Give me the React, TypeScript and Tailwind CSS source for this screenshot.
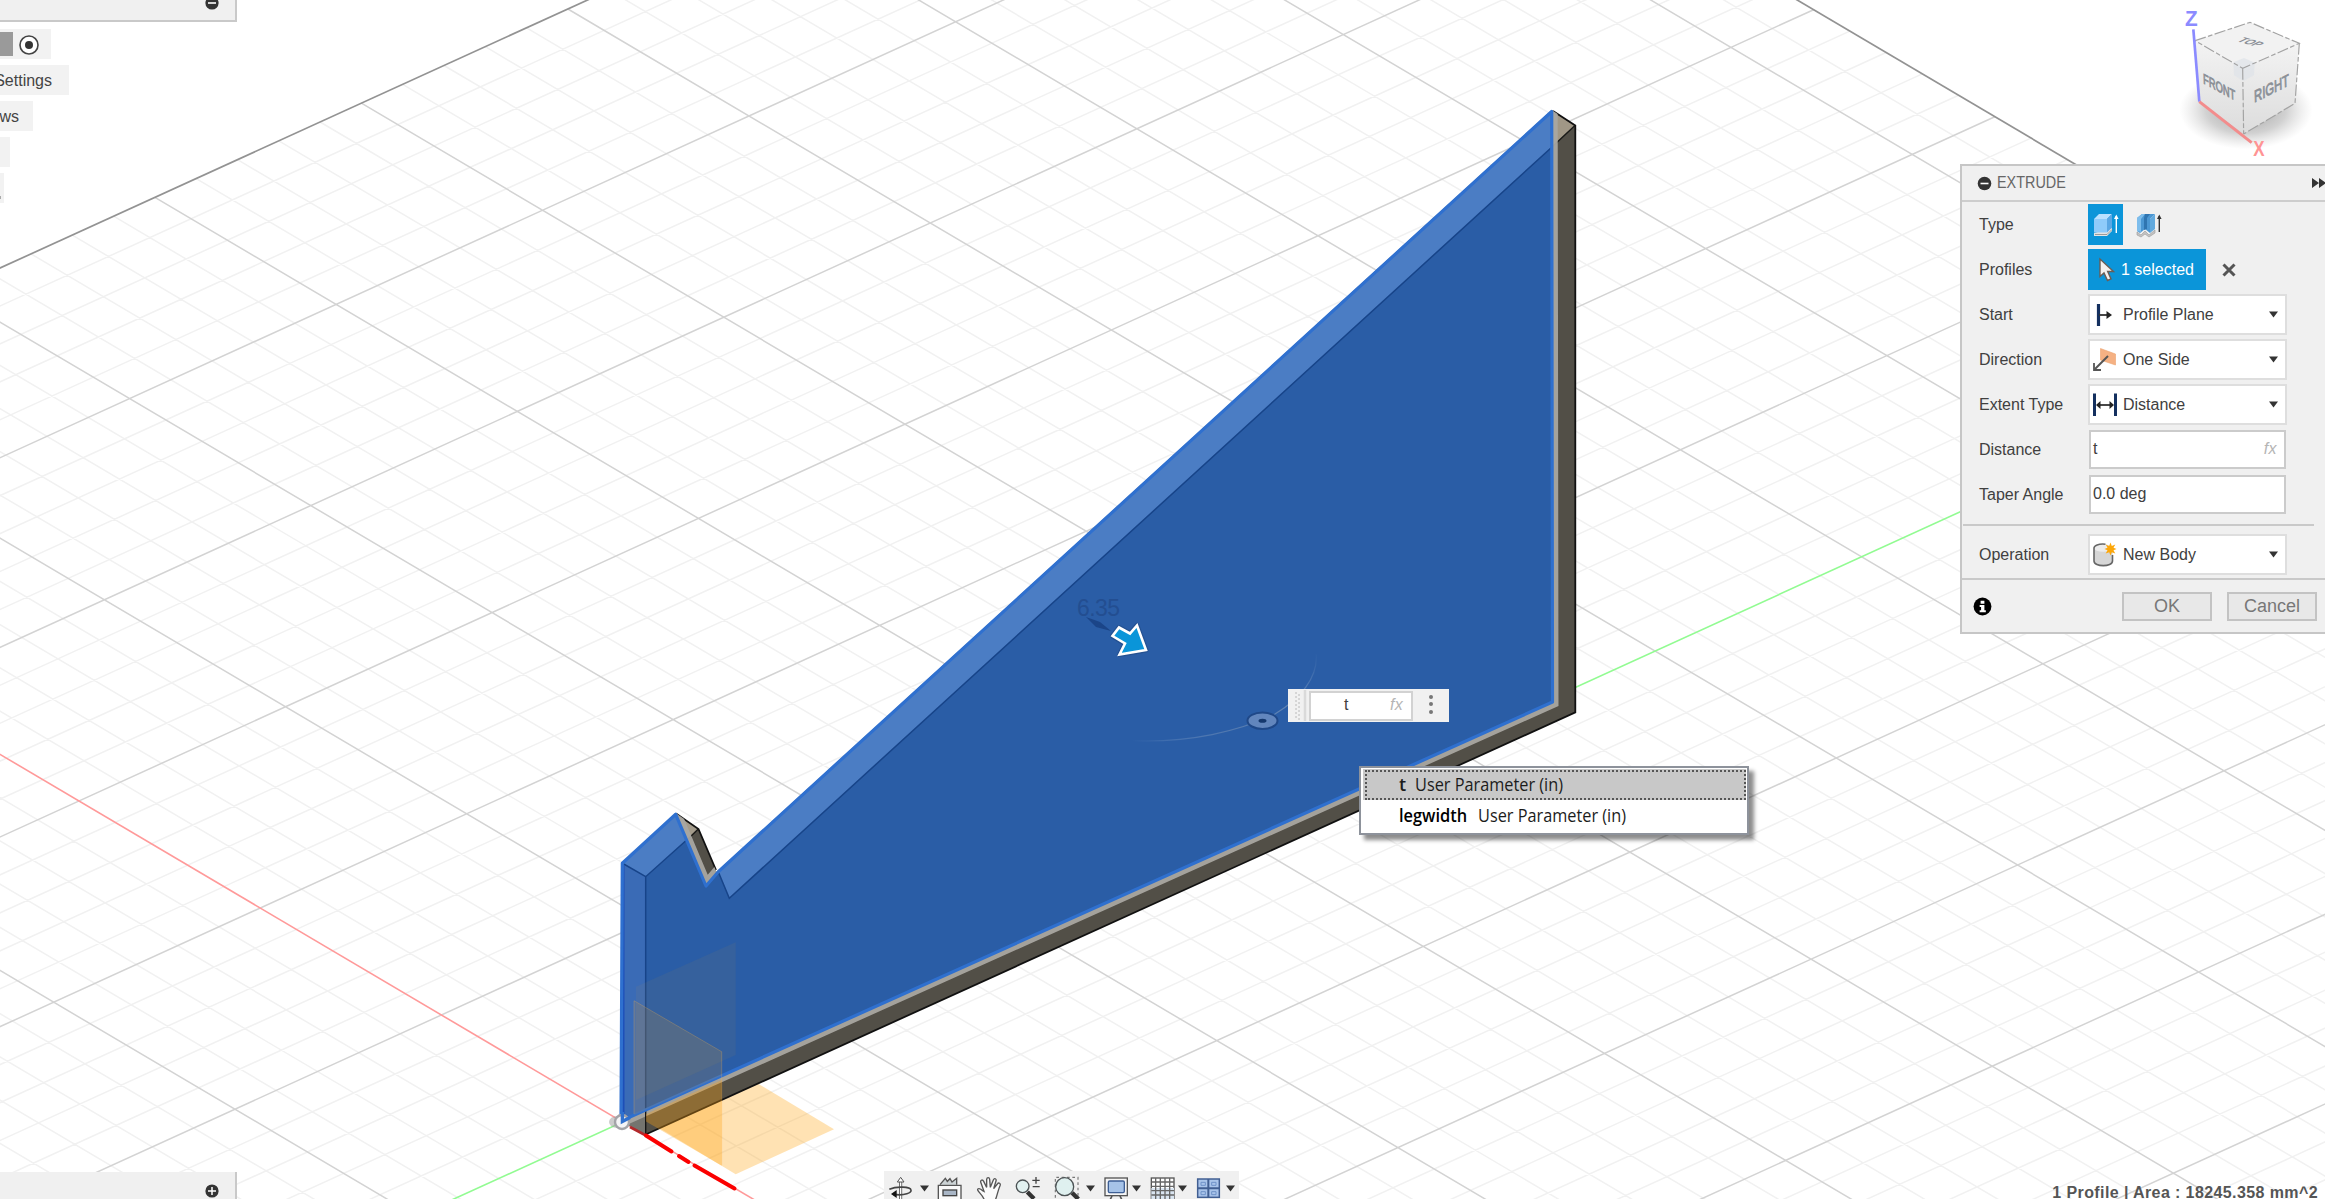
import React from "react";

const A = [206.5, -94.2];
const B = [181.2, 107];
const ORIGIN = [622.6, 1122];

const at = (i: number, j: number) => [
  ORIGIN[0] + i * A[0] + j * B[0],
  ORIGIN[1] + i * A[1] + j * B[1],
];

const seg = (i1: number, j1: number, i2: number, j2: number) => {
  const p = at(i1, j1);
  const q = at(i2, j2);
  return `M${p[0].toFixed(1)} ${p[1].toFixed(1)}L${q[0].toFixed(1)} ${q[1].toFixed(1)}`;
};

const EDGE_I = 8.4;
const EDGE_J = -6;

function gridPaths() {
  let minor = "";
  let major = "";
  for (let k = -30; k < EDGE_I * 5; k++) {
    const d = seg(k / 5, EDGE_J, k / 5, 9);
    if (k % 5 === 0) {
      if (k !== 0) major += d;
    } else minor += d;
  }
  for (let k = EDGE_J * 5 + 1; k <= 45; k++) {
    const d = seg(-9, k / 5, EDGE_I, k / 5);
    if (k % 5 === 0) {
      if (k !== 0) major += d;
    } else minor += d;
  }
  return { minor, major };
}

const PROFILE = "621,1121 622.3,863.3 675.7,814.3 706,886 718.3,871.7 1551.7,111.5 1552.5,702";
const SILHOUETTE =
  "621,1121 622,863 675.7,813 698.5,829 716.5,872 1551.7,110 1575.3,125.5 1575.3,712.4 645.7,1134.5";

function Viewport() {
  const { minor, major } = gridPaths();
  return (
    <svg className="absolute inset-0" width="2325" height="1199" viewBox="0 0 2325 1199" fill="none">
      <defs>
        <clipPath id="solid">
          <polygon points={SILHOUETTE} />
        </clipPath>
        <clipPath id="face">
          <polygon points={PROFILE} />
        </clipPath>
        <linearGradient id="arcFade" x1="1132" y1="740" x2="1316" y2="650" gradientUnits="userSpaceOnUse">
          <stop offset="0" stopColor="#6f93c4" stopOpacity="0" />
          <stop offset="0.4" stopColor="#4f77af" />
          <stop offset="0.8" stopColor="#6486b4" />
          <stop offset="1" stopColor="#6f93c4" stopOpacity="0" />
        </linearGradient>
      </defs>

      <path d={minor} stroke="#f1f1f1" strokeWidth="1.5" />
      <path d={major} stroke="#d3d3d3" strokeWidth="1.5" />
      <path d={seg(-9, EDGE_J, EDGE_I, EDGE_J)} stroke="#939393" strokeWidth="1.7" />
      <path d={seg(EDGE_I, EDGE_J, EDGE_I, 9)} stroke="#939393" strokeWidth="1.7" />
      <path d={seg(0, -6, 0, 2)} stroke="#ff9a9a" strokeWidth="1.6" />
      <path d={seg(-4, 0, EDGE_I, 0)} stroke="#92fb92" strokeWidth="1.6" />

      {/* ground plane */}
      <polygon points="646,1120 748.3,1077.7 834,1129.3 735.7,1174.3" fill="#ffa514" fillOpacity="0.32" />

      {/* solid body */}
      <polygon points={SILHOUETTE} fill="#524f47" />
      <polygon points="1551,110 1575.3,125.5 1552,147" fill="#a09786" />
      <polygon points="675.7,813 698.5,829 686.7,840" fill="#a39b8b" />
      <path d="M1575 125.5L1552 147M698.3 829L686 841" stroke="#1a1a18" strokeWidth="1.5" />
      <path
        d="M1553 111L1575.3 125.5V712.4L645.7 1134.5M676 813.5L698.5 829L716 870"
        stroke="#111"
        strokeWidth="1.8"
      />
      <g clipPath="url(#solid)">
        <polygon points="621,1121 645.7,1108 645.7,1134.5" fill="#74746f" />
        <polygon points={PROFILE} stroke="#a9a6a1" strokeWidth="12" strokeOpacity="0.95" />
        <path d="M645.7 1100V1134" stroke="#111" strokeWidth="1.3" />
      </g>

      {/* selected profile */}
      <polygon points={PROFILE} fill="#2a5da6" />
      <g clipPath="url(#face)">
        <polygon points="622,863 645.7,876.7 645.7,1134 621,1121" fill="#3a6bb6" />
        <polygon points="622,863 675.7,813 687.5,839.3 645.7,876.7" fill="#4b7dc4" />
        <polygon points="718.3,871.7 729.3,898.3 1552,147 1552,110" fill="#4b7dc4" />
        <path
          d="M622 863L645.7 876.7L687.5 839.3M645.7 876.7V1134M718.8 873L729.3 898.3L1552 147"
          stroke="#174489"
          strokeWidth="1.5"
        />
        <path d="M623.5 1119V865" stroke="#1c4fb8" strokeWidth="2" />
      </g>
      <polygon points={PROFILE} stroke="#2f70cf" strokeWidth="3.2" strokeLinejoin="round" />

      {/* origin planes */}
      <polygon points="636,986.7 735.7,942.3 735.7,1055 636,1100" fill="#ffa514" fillOpacity="0.06" />
      <g clipPath="url(#face)">
        <polygon points="634,1000.7 721.7,1051.7 721.7,1165.7 634,1114.3" fill="#ffa514" fillOpacity="0.14" />
      </g>
      <polygon points="646,1114 721.7,1080 721.7,1165.7 646,1121.5" fill="#ffa514" fillOpacity="0.34" />
      <path d="M634 1114V1000.7L721.7 1051.7V1165" stroke="#ffb84d" strokeOpacity="0.25" />

      {/* origin and near axis */}
      <ellipse cx="617" cy="1122" rx="8" ry="6" fill="#9a9a9a" fillOpacity="0.5" />
      <circle cx="622" cy="1122" r="7" fill="#f4f4f6" stroke="#a3a3a8" strokeWidth="2.4" />
      <path d="M622.4 1112V1121.5L630 1117.5" stroke="#2f70cf" strokeWidth="3.4" />
      <path d="M630 1127L646 1135.5" stroke="#b3282b" strokeWidth="2.6" />
      <path
        d="M646 1135.5L671.5 1151.5M679 1156L688.5 1162M694.5 1165.5L734.5 1188.5"
        stroke="#fb0000"
        strokeWidth="4"
        strokeLinecap="round"
      />

      {/* distance manipulator */}
      <text x="1077" y="616" fontSize="23" textLength="43" fill="#234e91" fontFamily="Liberation Sans, sans-serif">
        6.35
      </text>
      <path d="M1086 617L1100 622L1111 631L1096 627Z" fill="#1b4588" />
      <path
        d="M1119 627.5L1130 633.5L1137 625.5L1146 650L1119.5 654.5L1125 643.5L1112.5 636Z"
        fill="#0a95d9"
        stroke="#1d467d"
        strokeWidth="5"
        strokeLinejoin="round"
        strokeOpacity="0.5"
      />
      <path
        d="M1119 627.5L1130 633.5L1137 625.5L1146 650L1119.5 654.5L1125 643.5L1112.5 636Z"
        fill="#0a95d9"
        stroke="#fff"
        strokeWidth="2.6"
      />

      {/* taper manipulator */}
      <path
        d="M1132 740.7C1190 743 1240 731 1275 714C1300 699 1318 678 1316.3 654"
        stroke="url(#arcFade)"
        strokeWidth="1.2"
      />
      <ellipse cx="1262.5" cy="720.7" rx="15" ry="8.2" fill="#6286bd" stroke="#1f4888" strokeWidth="2" />
      <ellipse cx="1262.5" cy="720.7" rx="4" ry="2" fill="#15386d" />
    </svg>
  );
}

function ViewCube() {
  return (
    <svg className="absolute left-[2180px] top-0" width="145" height="160" viewBox="720 0 435 480" fill="none">
      <defs>
        <linearGradient id="cubeL" x1="0" y1="0" x2="0" y2="1">
          <stop offset="0" stopColor="#f3f3f3" />
          <stop offset="1" stopColor="#dcdcdc" />
        </linearGradient>
        <radialGradient id="cubeShadow">
          <stop offset="0" stopColor="#777" stopOpacity="0.75" />
          <stop offset="0.6" stopColor="#999" stopOpacity="0.45" />
          <stop offset="1" stopColor="#bbb" stopOpacity="0" />
        </radialGradient>
      </defs>
      <ellipse cx="918" cy="330" rx="200" ry="118" fill="url(#cubeShadow)" />
      <polygon points="765,122 930,67 1078,130 908,205" fill="#f2f2f2" />
      <polygon points="765,122 908,205 911,402 778,305" fill="url(#cubeL)" />
      <polygon points="908,205 1078,130 1065,310 911,402" fill="url(#cubeL)" />
      <polygon points="880,187 912,174 944,188 942,226 910,243 882,226" fill="#dfe3e8" fillOpacity="0.75" />
      <path
        d="M765 122L930 67L1078 130L908 205ZM908 205L911 402M1078 130L1065 310L911 402"
        stroke="#a3a3a3"
        strokeWidth="3.5"
        strokeDasharray="34 7 14 7"
      />
      <path d="M778 305L760 88" stroke="#8b8bff" strokeWidth="8" />
      <path d="M778 305L935 428" stroke="#f38c8c" strokeWidth="9" />
      <g fontFamily="Liberation Sans, sans-serif" textAnchor="middle">
        <text
          transform="matrix(1 0.55 0.03 1 838 276)"
          fontSize="43"
          textLength="96"
          lengthAdjust="spacingAndGlyphs"
          fill="#8b9097"
          stroke="#8b9097"
          strokeWidth="2.5"
        >
          FRONT
        </text>
        <text
          transform="matrix(1 -0.5 0.03 1 995 282)"
          fontSize="50"
          textLength="104"
          lengthAdjust="spacingAndGlyphs"
          fill="#8b9097"
          stroke="#8b9097"
          strokeWidth="2.5"
        >
          RIGHT
        </text>
        <text
          transform="matrix(1 0.3 -0.9 0.42 920 132)"
          fontSize="40"
          fontWeight="bold"
          textLength="62"
          lengthAdjust="spacingAndGlyphs"
          fill="#8b9097"
        >
          TOP
        </text>
        <text x="754" y="79" fontSize="66" fontWeight="bold" textLength="38" lengthAdjust="spacingAndGlyphs" fill="#8b8bff">
          Z
        </text>
        <text x="957" y="467" fontSize="66" fontWeight="bold" textLength="34" lengthAdjust="spacingAndGlyphs" fill="#ff9494">
          X
        </text>
      </g>
    </svg>
  );
}

function Caret() {
  return (
    <svg width="9" height="7" viewBox="0 0 9 7" className="shrink-0">
      <path d="M0 0.5H9L4.5 6.5Z" fill="#333" />
    </svg>
  );
}

function Row({ label, children }: { label: string; children: React.ReactNode }) {
  return (
    <div className="flex h-[45px] items-center pl-[17px]">
      <span className="w-[109px] shrink-0 whitespace-nowrap pt-px">{label}</span>
      {children}
    </div>
  );
}

function Select({ icon, text }: { icon: React.ReactNode; text: string }) {
  return (
    <div className="flex h-[41px] w-[199px] items-center border-2 border-[#dedede] bg-white pr-[7px]">
      <span className="flex w-[33px] shrink-0 justify-start pl-[2px]">{icon}</span>
      <span className="flex-1 whitespace-nowrap pt-px">{text}</span>
      <Caret />
    </div>
  );
}

const StartIcon = () => (
  <svg width="26" height="28" viewBox="0 0 26 28" fill="none">
    <path d="M6.500 3V25" stroke="#14305f" strokeWidth="3.2" />
    <path d="M7 14H17" stroke="#333" strokeWidth="1.8" />
    <path d="M14.500 10L20 14L14.500 18Z" fill="#222" />
  </svg>
);

const DirectionIcon = () => (
  <svg width="26" height="28" viewBox="0 0 26 28" fill="none">
    <path d="M8.5 2.5L23.5 8V19L8.5 14Z" fill="#f5b183" stroke="#eda26f" strokeWidth="0.6" />
    <path d="M16 10L3 23" stroke="#555" strokeWidth="2" />
    <path d="M2 17V24H9" stroke="#555" strokeWidth="1.8" />
  </svg>
);

const DistanceIcon = () => (
  <svg width="26" height="28" viewBox="0 0 26 28" fill="none">
    <path d="M2.500 2.500V25M23.500 2.500V25" stroke="#14305f" strokeWidth="3" />
    <path d="M6 14H20" stroke="#333" strokeWidth="1.8" />
    <path d="M8.500 10L4 14L8.500 18ZM17.500 10L22 14L17.500 18Z" fill="#222" />
  </svg>
);

const NewBodyIcon = () => (
  <svg width="26" height="28" viewBox="0 0 26 28" fill="none">
    <path d="M2 6.500V20C2 26 20.500 26 20.500 20V6.500Z" fill="#d6d6d6" />
    <ellipse cx="11.200" cy="7" rx="9.200" ry="3.800" fill="#ececec" />
    <path d="M13.500 3.200C6.500 2.500 2 4.500 2 7V20C2 26.200 20.500 26.200 20.500 20V14" stroke="#666" strokeWidth="1.600" />
    <path
      d="M18.500 1.500L19.800 5L23.300 3.500L21.500 6.800L24.500 8L21.500 9.300L23.300 12.600L19.800 11.200L18.500 14.500L17.200 11.200L13.700 12.600L15.500 9.300L12.500 8L15.500 6.800L13.700 3.500L17.200 5Z"
      fill="#fca70a"
    />
  </svg>
);

function ExtrudePanel() {
  return (
    <div className="absolute left-[1960px] top-[164px] flex h-[470px] w-[373px] flex-col border-2 border-[#c6c6c6] bg-[#f0f0f0] text-base leading-5 text-[#404040]">
      <div className="flex h-[36px] shrink-0 items-center border-b-2 border-[#cdcdcd] pl-[15px] pr-[5px]">
        <svg width="15" height="15" viewBox="0 0 15 15">
          <circle cx="7.500" cy="7.500" r="6.800" fill="#333" />
          <path d="M3.500 7.500H11.500" stroke="#fff" strokeWidth="1.600" />
        </svg>
        <span className="-mt-px ml-[5px] flex-1 origin-left scale-x-[0.9] text-[#666]">EXTRUDE</span>
        <svg width="14" height="10" viewBox="0 0 14 10">
          <path d="M0 0L7 5L0 10ZM7 0L14 5L7 10Z" fill="#333" />
        </svg>
      </div>
      <div className="shrink-0">
        <Row label="Type">
          <div className="flex h-[41px] w-[35px] items-center justify-center bg-[#0b95d9]">
            <svg width="26" height="28" viewBox="0 0 26 28" fill="none">
              <path d="M1 22V25H14L19 20V17Z" fill="#e4e4e4" />
              <path d="M2 23.500H14L19 18.500" stroke="#888" strokeWidth="0.800" />
              <path d="M1 8L6 3H19L14 8Z" fill="#b9e1ff" />
              <path d="M1 8H14V21.500H1Z" fill="#8fcbfa" />
              <path d="M14 8L19 3V16.500L14 21.500Z" fill="#5ba7e4" />
              <path d="M23.300 22V5" stroke="#fff" strokeWidth="1.400" />
              <path d="M21 8L23.300 3.500L25.600 8Z" fill="#fff" />
            </svg>
          </div>
          <svg width="26" height="28" viewBox="0 0 26 28" fill="none" className="ml-[13px]">
            <path d="M1 21L5 24L9 20L13 24L19 19L19 22L13 26L9 23L5 26L1 24Z" fill="#c3c3c3" stroke="#999" strokeWidth="0.600" />
            <path d="M1 7L6 3H19L14 8V22L9 18L4 22L1 20Z" fill="#4b97d3" />
            <path d="M1 7L6 3H9L5 8V21L1 20Z" fill="#7dbdec" />
            <path d="M9 3H14L11 7V18L8 19V7Z" fill="#2f75b1" />
            <path d="M14 8L19 3V18L14 22Z" fill="#62aade" />
            <path d="M23.300 21V5" stroke="#333" strokeWidth="1.400" />
            <path d="M21 8L23.300 3.500L25.600 8Z" fill="#333" />
          </svg>
        </Row>
        <Row label="Profiles">
          <div className="flex h-[41px] w-[118px] items-center bg-[#0b95d9] pl-[10px] text-white">
            <svg width="17" height="26" viewBox="0 0 17 26">
              <path
                d="M2 2V19.500L6 16L9.500 23.500L13 22L9.700 14.500H15.500Z"
                fill="#f4f0ee"
                stroke="#6b5d55"
                strokeWidth="1.400"
              />
            </svg>
            <span className="ml-[6px] whitespace-nowrap pt-px">1 selected</span>
          </div>
          <svg width="14" height="14" viewBox="0 0 14 14" className="ml-[16px]">
            <path d="M1.500 1.500L12.500 12.500M12.500 1.500L1.500 12.500" stroke="#555" strokeWidth="3" />
          </svg>
        </Row>
        <Row label="Start">
          <Select icon={<StartIcon />} text="Profile Plane" />
        </Row>
        <Row label="Direction">
          <Select icon={<DirectionIcon />} text="One Side" />
        </Row>
        <Row label="Extent Type">
          <Select icon={<DistanceIcon />} text="Distance" />
        </Row>
        <Row label="Distance">
          <div className="ml-px flex h-[39px] w-[197px] items-center justify-between border-2 border-[#cbcbcb] bg-white pb-[2px] pl-[2px] pr-[7px]">
            <span>t</span>
            <span className="italic tracking-wide text-[#b5b5b5]">fx</span>
          </div>
        </Row>
        <Row label="Taper Angle">
          <div className="ml-px flex h-[39px] w-[197px] items-center border-2 border-[#cbcbcb] bg-white pb-[2px] pl-[2px]">
            0.0 deg
          </div>
        </Row>
      </div>
      <div className="ml-px mt-[7px] h-[2px] w-[351px] shrink-0 bg-[#c9c9c9]" />
      <div className="shrink-0 pt-[6px]">
        <Row label="Operation">
          <Select icon={<NewBodyIcon />} text="New Body" />
        </Row>
      </div>
      <div className="mt-px flex flex-1 items-center border-t-2 border-[#c9c9c9] pl-[11px] text-lg text-[#777]">
        <svg width="19" height="19" viewBox="0 0 20 20">
          <circle cx="10" cy="10" r="9.400" fill="#000" />
          <path d="M8 4H12V7H8ZM7 8.500H12V14H13.500V16H7V14H8.500V10.500H7Z" fill="#fff" />
        </svg>
        <div className="ml-[130px] flex h-[29px] w-[90px] items-center justify-center border-2 border-[#c3c3c3] bg-[#e8e8e8]">OK</div>
        <div className="ml-[15px] flex h-[29px] w-[90px] items-center justify-center border-2 border-[#c3c3c3] bg-[#e8e8e8]">
          Cancel
        </div>
      </div>
    </div>
  );
}

function BrowserTree() {
  return (
    <div className="absolute left-0 top-0 flex flex-col items-start text-base leading-5 text-[#444]">
      <div className="flex h-[22px] w-[237px] justify-end border-b-2 border-r-2 border-[#c9c9c9] bg-[#f0f0f0] pr-4">
        <svg width="14" height="10" viewBox="0 0 14 10">
          <circle cx="7" cy="3" r="6.600" fill="#333" />
          <path d="M3 3H11" stroke="#fff" strokeWidth="1.600" />
        </svg>
      </div>
      <div className="mt-[7px] flex h-[30px] w-[51px] items-center bg-[#f2f2f2]">
        <div className="h-[24px] w-[13px] bg-[#9a9a9a]" />
        <svg width="20" height="20" viewBox="0 0 20 20" className="ml-[6px] mt-px">
          <circle cx="10" cy="10" r="9" fill="#fff" stroke="#444" strokeWidth="1.600" />
          <circle cx="10" cy="10" r="4" fill="#333" />
        </svg>
      </div>
      <div className="mt-[6px] flex h-[30px] w-[69px] items-center justify-end overflow-hidden bg-[#f2f2f2] pr-[17px] pt-[2px]">
        Settings
      </div>
      <div className="mt-[6px] flex h-[30px] w-[33px] items-center justify-end overflow-hidden bg-[#f2f2f2] pr-[14px] pt-[2px]">
        ws
      </div>
      <div className="mt-[6px] h-[30px] w-[10px] bg-[#f2f2f2]" />
      <div className="mt-[6px] h-[30px] w-[4px] bg-[#f2f2f2] pt-[23px]">
        <div className="h-[3px] w-px bg-[#aaa]" />
      </div>
    </div>
  );
}

function CommentsBar() {
  return (
    <div className="absolute bottom-0 left-0 flex h-[27px] w-[237px] justify-end border-r-2 border-[#c9c9c9] bg-[#f0f0f0] pr-4 pt-3">
      <svg width="14" height="14" viewBox="0 0 14 14">
        <circle cx="7" cy="7" r="6.600" fill="#333" />
        <path d="M3 7H11M7 3V11" stroke="#fff" strokeWidth="1.500" />
      </svg>
    </div>
  );
}

function NavCaret({ className }: { className: string }) {
  return (
    <span className={`flex h-[28px] shrink-0 justify-center pt-[14px] ${className}`}>
      <Caret />
    </span>
  );
}

function NavBar() {
  return (
    <div className="absolute left-[884px] top-[1171px] flex h-[28px] w-[355px] overflow-hidden bg-[#f0f0f0]">
      <svg width="33" height="28" viewBox="72 33 99 84" fill="none">
        <path d="M122 117V64" stroke="#555" strokeWidth="9" />
        <path d="M122 117V66" stroke="#fff" strokeWidth="4" />
        <path d="M122 52L112 66H132Z" fill="#fff" stroke="#555" strokeWidth="3" />
        <path d="M100 103C135 108 155 98 153 90C151 80 110 78 88 88" stroke="#444" strokeWidth="5" />
        <path d="M110 90V114L93 102Z" fill="#111" />
      </svg>
      <NavCaret className="w-[15px]" />
      <svg width="36" height="28" viewBox="216 33 108 84" fill="none">
        <path d="M240 74L256 55L262 64L270 56L276 66L290 55V74" fill="#ccd3d5" stroke="#555" strokeWidth="4" />
        <path d="M235 120V76H303V120" fill="#fafafa" stroke="#555" strokeWidth="4" />
        <rect x="249" y="90" width="41" height="17" fill="#a9b6c6" stroke="#444" strokeWidth="4" />
      </svg>
      <svg width="39" height="28" viewBox="324 33 117 84" fill="none">
        <path
          d="M373 120C369 106 356 98 353 90C352 84 360 84 368 92L372 94L362 66C361 59 368 58 371 64L380 82L380 58C381 51 388 51 389 58L391 82L400 60C403 53 410 56 408 63L401 86L412 72C416 66 423 70 420 77C414 90 412 106 406 120Z"
          fill="#fbfbfb"
          stroke="#555"
          strokeWidth="4"
        />
      </svg>
      <svg width="40" height="28" viewBox="441 33 120 84" fill="none">
        <path d="M502 96L522 116" stroke="#333" strokeWidth="13" />
        <circle cx="488" cy="79" r="19" fill="#e2f2f1" stroke="#4c5355" strokeWidth="4" />
        <path d="M517 61H539M528 51V71M518 80H539" stroke="#444" strokeWidth="4" />
      </svg>
      <svg width="35" height="28" viewBox="561 33 105 84" fill="none">
        <path d="M586 113V52H654V113" stroke="#777" strokeWidth="3.500" strokeDasharray="8 8" />
        <path d="M636 98L655 117" stroke="#333" strokeWidth="13" />
        <circle cx="614" cy="80" r="27" fill="#dff0ef" stroke="#4c5355" strokeWidth="4" />
      </svg>
      <NavCaret className="w-[16px]" />
      <svg width="32" height="28" viewBox="714 33 96 84" fill="none">
        <path d="M756 108L750 120M780 108L786 120" stroke="#555" strokeWidth="5" />
        <rect x="735" y="54" width="67" height="53" fill="#f5f5f5" stroke="#555" strokeWidth="4" />
        <rect x="745" y="63" width="48" height="35" rx="4" fill="#a6c3e8" stroke="#3e5f95" strokeWidth="4" />
      </svg>
      <NavCaret className="w-[13px]" />
      <svg width="33" height="28" viewBox="849 33 99 84" fill="none">
        <rect x="874" y="54" width="68" height="70" fill="#fff" stroke="#555" strokeWidth="4" />
        <path d="M874 84H942V117H874Z" fill="#d9e4f0" />
        <path d="M887 54V117M901 54V117M915 54V117M929 54V117M874 66H942M874 79H942M874 92H942M874 105H942" stroke="#666" strokeWidth="4" />
      </svg>
      <NavCaret className="w-[13px]" />
      <svg width="33" height="28" viewBox="987 33 99 84" fill="none">
        <rect x="1013" y="57" width="65" height="55" fill="#a9c4ea" stroke="#415f92" strokeWidth="4.500" />
        <path d="M1045 57V112M1013 85H1078" stroke="#415f92" strokeWidth="6" />
        <path d="M1023 67H1036V76H1023ZM1055 67H1068V76H1055ZM1023 95H1036V104H1023ZM1055 95H1068V104H1055Z" stroke="#6f92c8" strokeWidth="3" />
      </svg>
      <NavCaret className="w-[17px]" />
    </div>
  );
}

function FloatingInput() {
  return (
    <div className="absolute left-[1288px] top-[689px] flex h-[33px] w-[161px] items-center bg-[#f1f1f1] text-base text-[#404040]">
      <svg width="21" height="33" viewBox="0 0 21 33" fill="none">
        <path d="M8 3V31M11 5V31" stroke="#cfcfcf" strokeWidth="1.600" strokeDasharray="2 2" />
        <path d="M17 1V32" stroke="#dadada" strokeWidth="2.500" />
      </svg>
      <div className="flex h-[30px] w-[104px] items-center border-2 border-[#d2d2d2] bg-white pb-[2px] pl-[33px]">
        <span className="w-[46px]">t</span>
        <span className="italic tracking-wide text-[#b5b5b5]">fx</span>
      </div>
      <div className="mb-[3px] ml-4 flex flex-col gap-[3.500px]">
        <i className="h-1 w-1 rounded-full bg-[#777]" />
        <i className="h-1 w-1 rounded-full bg-[#777]" />
        <i className="h-1 w-1 rounded-full bg-[#777]" />
      </div>
    </div>
  );
}

function Suggestions() {
  return (
    <div className="absolute left-[1359px] top-[766px] flex h-[69px] w-[390px] flex-col border-2 border-[#8d929b] bg-white p-px pl-[2px] font-['Open_Sans',sans-serif] text-[18px] text-[#1c1c1c] shadow-[5px_5px_4px_rgba(0,0,0,0.45)]">
      <div className="flex h-[31px] items-center bg-[#c8c8c8] pl-[2px]">
        <div className="flex h-[30px] flex-1 items-center border-2 border-dotted border-[#555] pl-[32px]">
          <span className="w-4 font-semibold">t</span>
          <span className="origin-left scale-x-[0.905] whitespace-nowrap">User Parameter (in)</span>
        </div>
      </div>
      <div className="flex h-[30px] items-center pl-[36px]">
        <span className="w-[79px] origin-left scale-x-[0.91] font-semibold text-black">legwidth</span>
        <span className="origin-left scale-x-[0.905] whitespace-nowrap">User Parameter (in)</span>
      </div>
    </div>
  );
}

export default function App() {
  return (
    <div className="relative h-[1199px] w-[2325px] overflow-hidden bg-white font-['Liberation_Sans',Arial,sans-serif]">
      <Viewport />
      <BrowserTree />
      <CommentsBar />
      <ViewCube />
      <ExtrudePanel />
      <FloatingInput />
      <Suggestions />
      <NavBar />
      <div className="absolute bottom-[-4px] right-[7px] whitespace-nowrap text-base font-bold leading-5 tracking-[0.4px] text-[#555]">
        1 Profile | Area : 18245.358 mm^2
      </div>
    </div>
  );
}
